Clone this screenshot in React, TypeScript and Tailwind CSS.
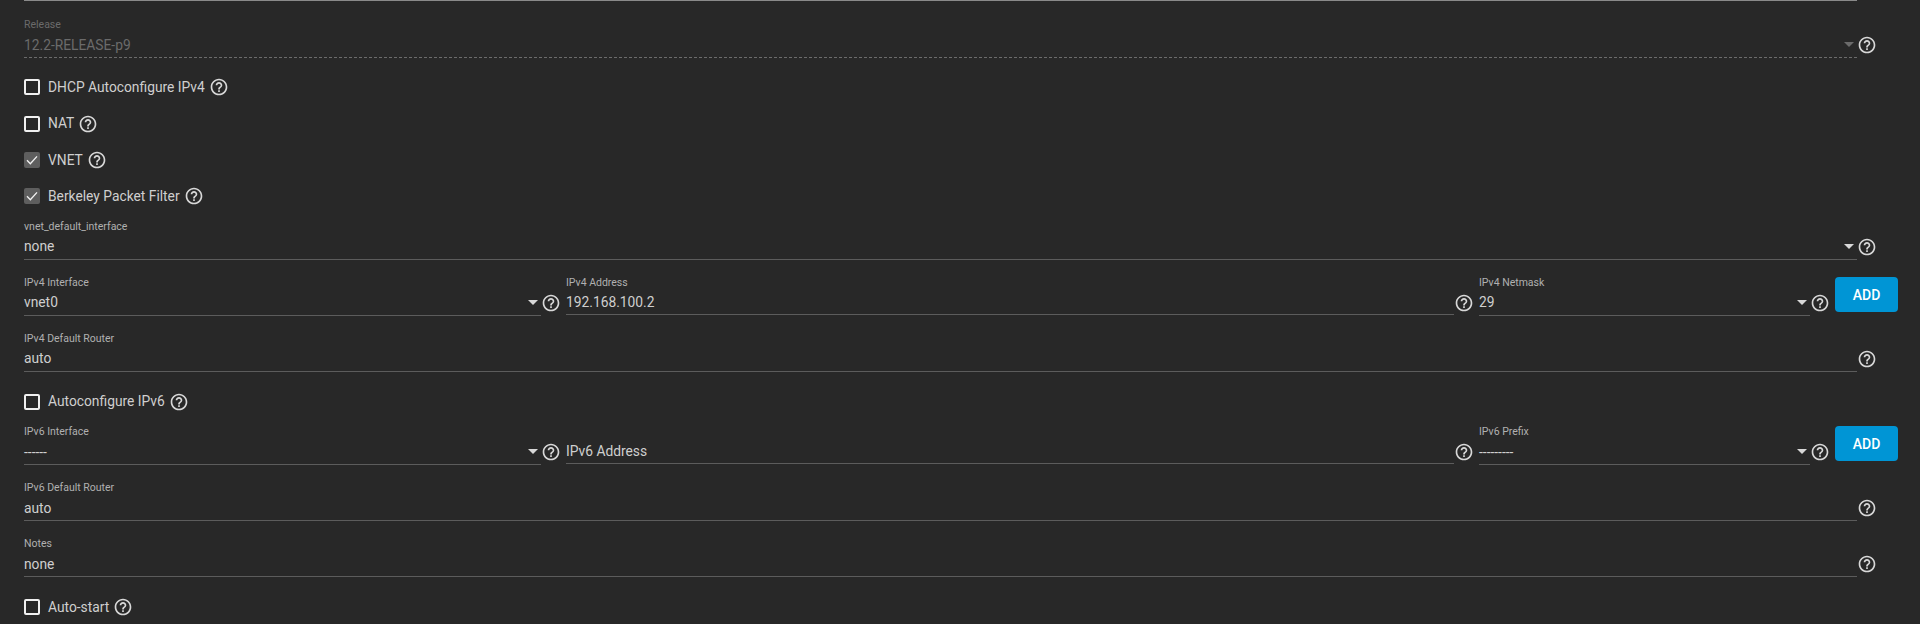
import { MdArrowDropDown, MdHelpOutline } from 'react-icons/md';

function Help() {
  return <MdHelpOutline className="mt-[18px] h-5 w-5 shrink-0 text-[#d8d8d8]" />;
}

type FieldProps = {
  label?: string;
  value: string;
  select?: boolean;
  disabled?: boolean;
  short?: boolean;
  className?: string;
};

// floating label + value + underline, same block for inputs and selects
function Field({ label, value, select, disabled, short, className }: FieldProps) {
  return (
    <div className={`flex flex-col ${className ?? 'flex-1'}`}>
      <div className={`h-[14px] pt-px text-[10.5px] leading-[14px] ${disabled ? 'text-[#6b6b6b]' : 'text-[#b0b0b0]'}`}>
        {label}
      </div>
      <div
        className={`flex items-center justify-between border-b ${short ? 'h-[26px]' : 'h-[27px]'} ${
          disabled ? 'border-dashed border-[#6b6b6b] text-[#6b6b6b]' : 'border-[#5c5c5c] text-[#cfcfcf]'
        }`}
      >
        <span className="pt-[2px] text-[13.8px]">{value}</span>
        {select && (
          <MdArrowDropDown className={`-mr-1 h-6 w-6 ${disabled ? 'text-[#6b6b6b]' : 'text-[#d8d8d8]'}`} />
        )}
      </div>
    </div>
  );
}

function FullField(props: FieldProps) {
  return (
    <div className={`flex items-start ${props.className ?? ''}`}>
      <Field {...props} className="w-[1833px]" />
      <Help />
    </div>
  );
}

function Check({ label, checked, className }: { label: string; checked?: boolean; className?: string }) {
  return (
    <div className={`flex h-[36.4px] items-center ${className ?? ''}`}>
      {checked ? (
        <div className="flex h-4 w-4 items-center justify-center rounded-[2px] bg-[#5e5e5e]">
          <svg viewBox="0 0 24 24" className="h-4 w-4" fill="none" stroke="#f2f2f2" strokeWidth="2">
            <path d="M4.5 12.5l5 5 10-11" />
          </svg>
        </div>
      ) : (
        <div className="h-4 w-4 rounded-[2px] border-2 border-[#f0f0f0]" />
      )}
      <span className="ml-2 mr-1 text-[13.8px] text-[#cfcfcf]">{label}</span>
      <MdHelpOutline className="h-5 w-5 shrink-0 text-[#d8d8d8]" />
    </div>
  );
}

function AddRow({
  className,
  first,
  second,
  third,
}: {
  className?: string;
  first: FieldProps;
  second: FieldProps;
  third: FieldProps;
}) {
  return (
    <div className={`flex items-start ${className ?? ''}`}>
      <Field {...first} select className="w-[517px]" />
      <Help />
      <Field {...second} short className="ml-[5px] w-[888px]" />
      <Help />
      <Field {...third} select className="ml-[5px] w-[331px]" />
      <Help />
      <button className="ml-[5px] mt-[2px] h-[35px] w-[63px] rounded-[4px] bg-[#0095d5] pt-[2px] text-[14px] font-medium text-white">
        ADD
      </button>
    </div>
  );
}

export default function App() {
  return (
    <div className="h-[624px] w-[1920px] overflow-hidden bg-[#282828] pl-6 font-['Roboto',sans-serif]">
      <div className="h-px w-[1833px] bg-[#8a8a8a]" />
      <FullField className="mt-4" label="Release" value="12.2-RELEASE-p9" select disabled />

      <div className="mt-[11px] flex flex-col">
        <Check label="DHCP Autoconfigure IPv4" />
        <Check label="NAT" />
        <Check label="VNET" checked />
        <Check label="Berkeley Packet Filter" checked />
      </div>

      <FullField className="mt-1" label="vnet_default_interface" value="none" select />
      <AddRow
        className="mt-[15px]"
        first={{ label: 'IPv4 Interface', value: 'vnet0' }}
        second={{ label: 'IPv4 Address', value: '192.168.100.2' }}
        third={{ label: 'IPv4 Netmask', value: '29' }}
      />
      <FullField className="mt-[15px]" label="IPv4 Default Router" value="auto" />

      <Check className="mt-3" label="Autoconfigure IPv6" />

      <AddRow
        className="mt-1"
        first={{ label: 'IPv6 Interface', value: '------' }}
        second={{ label: '', value: 'IPv6 Address' }}
        third={{ label: 'IPv6 Prefix', value: '---------' }}
      />
      <FullField className="mt-[15px]" label="IPv6 Default Router" value="auto" />
      <FullField className="mt-[15px]" label="Notes" value="none" />

      <Check className="mt-3" label="Auto-start" />
    </div>
  );
}
